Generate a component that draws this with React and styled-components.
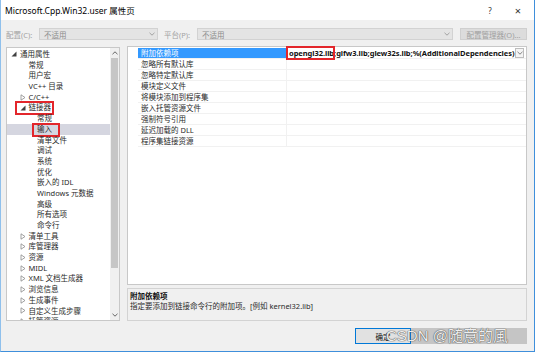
import React from "react";
import styled, { createGlobalStyle } from "styled-components";

const GlobalStyle = createGlobalStyle`
  html, body { margin: 0; padding: 0; background: #ffffff; }
  body { font-family: "Noto Sans", "Noto Sans CJK SC", sans-serif; }
  * { box-sizing: border-box; }
`;

const Window = styled.div`
  position: relative;
  width: 535px;
  height: 352px;
  background: #f0f0f0;
  border: 1px solid #3f8fdb;
  border-top: none;
  border-left-color: #8fc0ec;
  display: flex;
  flex-direction: column;
  font-size: 7.5px;
  color: #1a1a1a;
`;

const TitleBar = styled.div`
  height: 20px;
  background: #ffffff;
  display: flex;
  align-items: center;
  padding: 0 2px 0 4px;
`;

const Title = styled.div`
  flex: 1;
  font-size: 8.5px;
  color: #000;
`;

const TitleButton = styled.div`
  width: 28px;
  text-align: center;
  font-size: ${(p) => p.$size || 9}px;
  color: #333;
`;

const Toolbar = styled.div`
  margin-top: 8px;
  height: 12px;
  display: flex;
  align-items: center;
  padding-left: 5px;
`;

const Label = styled.div`
  width: ${(p) => p.$w}px;
  margin-left: ${(p) => p.$ml || 0}px;
  color: #a3a3a3;
  white-space: nowrap;
`;

const Combo = styled.div`
  width: ${(p) => p.$w}px;
  height: 12px;
  background: #e4e4e4;
  border: 1px solid #d2d2d2;
  display: flex;
  align-items: center;
  padding-left: 4px;
  color: #8c8c8c;
`;

const ComboText = styled.div`
  flex: 1;
`;

const ComboArrow = styled.div`
  width: 10px;
  display: flex;
  justify-content: center;
`;

const DisabledButton = styled.div`
  width: ${(p) => p.$w}px;
  margin-left: ${(p) => p.$ml || 0}px;
  height: 12px;
  background: #dcdcdc;
  border: 1px solid #cfcfcf;
  color: #a0a0a0;
  display: flex;
  align-items: center;
  justify-content: center;
  white-space: nowrap;
`;

const Main = styled.div`
  margin-top: 6px;
  display: flex;
  align-items: flex-start;
  padding-left: 5px;
  gap: 7px;
`;

const Tree = styled.div`
  width: 114px;
  height: 274px;
  margin-top: 1px;
  background: #ffffff;
  border: 1px solid #c8c8c8;
  display: flex;
  overflow: hidden;
`;

const TreeList = styled.div`
  flex: 1;
  padding-top: 1px;
  overflow: hidden;
`;

const TreeRow = styled.div`
  height: 10.7px;
  line-height: 10.7px;
  display: flex;
  align-items: center;
  padding-left: ${(p) => 4 + p.$lvl * 8.5}px;
  background: ${(p) => (p.$sel ? "#d5d6e0" : "transparent")};
  white-space: nowrap;
  color: #2a2a2a;
`;

const Expander = styled.div`
  width: 9px;
  flex: none;
  display: flex;
  align-items: center;
`;

const TreeText = styled.span`
  position: relative;
`;

const RedBox = styled.span`
  position: absolute;
  border: 2px solid #e3262b;
  pointer-events: none;
  left: ${(p) => p.$l}px;
  right: ${(p) => p.$r}px;
  top: ${(p) => p.$t}px;
  bottom: ${(p) => p.$b}px;
`;

const Scrollbar = styled.div`
  width: 9px;
  flex: none;
  background: #f0f0f0;
  display: flex;
  flex-direction: column;
`;

const ScrollArrow = styled.div`
  height: 10px;
  display: flex;
  align-items: center;
  justify-content: center;
`;

const ScrollThumb = styled.div`
  height: 210px;
  margin: 0 1px;
  background: #c6c6c6;
`;

const ScrollTrack = styled.div`
  flex: 1;
`;

const RightCol = styled.div`
  width: 400px;
  display: flex;
  flex-direction: column;
  gap: 3px;
`;

const Grid = styled.div`
  height: 239px;
  background: #ffffff;
  border: 1px solid #c8c8c8;
  padding: 1px 0 0 10px;
`;

const GridRow = styled.div`
  height: 11px;
  display: flex;
  border-bottom: 1px solid #f1f1f1;
`;

const NameCell = styled.div`
  width: 149px;
  flex: none;
  padding-left: 3px;
  line-height: 10px;
  white-space: nowrap;
  background: ${(p) => (p.$sel ? "#3399ff" : "transparent")};
  color: ${(p) => (p.$sel ? "#ffffff" : "#2a2a2a")};
  border-right: 1px solid #f1f1f1;
`;

const ValueCell = styled.div`
  flex: 1;
  position: relative;
  display: flex;
  align-items: center;
  padding-left: 2px;
  font-weight: 700;
  color: #111;
  white-space: nowrap;
`;

const ValueText = styled.span`
  flex: 1;
  position: relative;
  letter-spacing: -0.05px;
`;

const DropButton = styled.div`
  width: 9px;
  height: 10px;
  margin-right: 2px;
  border: 1px solid #bdbdbd;
  background: #f4f4f4;
  display: flex;
  align-items: center;
  justify-content: center;
`;

const Desc = styled.div`
  height: 33px;
  border: 1px solid #d3d3d3;
  padding: 2px 2px;
  line-height: 10px;
`;

const DescTitle = styled.div`
  font-weight: 700;
  color: #111;
`;

const DescText = styled.div`
  color: #2a2a2a;
`;

const Footer = styled.div`
  position: relative;
  margin-top: 7px;
  height: 16px;
  display: flex;
  padding-left: 354px;
`;

const Button = styled.div`
  width: 56px;
  height: 16px;
  background: #e1e1e1;
  border: 1px solid ${(p) => (p.$primary ? "#0078d7" : "#adadad")};
  display: flex;
  align-items: center;
  justify-content: center;
  color: #111;
`;

const Watermark = styled.div`
  position: absolute;
  left: 382px;
  right: 7px;
  top: 0;
  height: 16px;
  background: linear-gradient(to right, transparent 28px, #c5c5c5 28px);
  font-family: "Liberation Sans", "Noto Sans CJK SC", sans-serif;
  font-size: 15px;
  line-height: 16px;
  color: #eeeeee;
  text-shadow: 0 0 1px #444, 0 0 1px #444;
  white-space: nowrap;
  padding-left: 3px;
`;

const Chevron = ({ dir = "down", color = "#9a9a9a" }) => (
  <svg width="6" height="4" viewBox="0 0 6 4">
    <polyline
      points={dir === "down" ? "0.5,0.8 3,3.2 5.5,0.8" : "0.5,3.2 3,0.8 5.5,3.2"}
      fill="none"
      stroke={color}
      strokeWidth="0.9"
    />
  </svg>
);

const OpenTri = () => (
  <svg width="6" height="6" viewBox="0 0 6 6">
    <polygon points="5.5,0.5 5.5,5.5 0.5,5.5" fill="#404040" />
  </svg>
);

const ClosedTri = () => (
  <svg width="6" height="7" viewBox="0 0 6 7">
    <polygon points="1,0.8 5,3.5 1,6.2" fill="none" stroke="#8a8a8a" strokeWidth="0.8" />
  </svg>
);

const treeItems = [
  { t: "通用属性", lvl: 0, exp: "open" },
  { t: "常规", lvl: 1 },
  { t: "用户宏", lvl: 1 },
  { t: "VC++ 目录", lvl: 1 },
  { t: "C/C++", lvl: 1, exp: "closed" },
  { t: "链接器", lvl: 1, exp: "open", box: "linker" },
  { t: "常规", lvl: 2 },
  { t: "输入", lvl: 2, sel: true, box: "input" },
  { t: "清单文件", lvl: 2 },
  { t: "调试", lvl: 2 },
  { t: "系统", lvl: 2 },
  { t: "优化", lvl: 2 },
  { t: "嵌入的 IDL", lvl: 2 },
  { t: "Windows 元数据", lvl: 2 },
  { t: "高级", lvl: 2 },
  { t: "所有选项", lvl: 2 },
  { t: "命令行", lvl: 2 },
  { t: "清单工具", lvl: 1, exp: "closed" },
  { t: "库管理器", lvl: 1, exp: "closed" },
  { t: "资源", lvl: 1, exp: "closed" },
  { t: "MIDL", lvl: 1, exp: "closed" },
  { t: "XML 文档生成器", lvl: 1, exp: "closed" },
  { t: "浏览信息", lvl: 1, exp: "closed" },
  { t: "生成事件", lvl: 1, exp: "closed" },
  { t: "自定义生成步骤", lvl: 1, exp: "closed" },
  { t: "托管资源", lvl: 1, exp: "closed" },
];

const props = [
  "附加依赖项",
  "忽略所有默认库",
  "忽略特定默认库",
  "模块定义文件",
  "将模块添加到程序集",
  "嵌入托管资源文件",
  "强制符号引用",
  "延迟加载的 DLL",
  "程序集链接资源",
];

export default function App() {
  return (
    <>
      <GlobalStyle />
      <Window>
        <TitleBar>
          <Title>Microsoft.Cpp.Win32.user 属性页</Title>
          <TitleButton $size={8}>?</TitleButton>
          <TitleButton $size={11}>×</TitleButton>
        </TitleBar>

        <Toolbar>
          <Label $w={33}>配置(C):</Label>
          <Combo $w={119}>
            <ComboText>不适用</ComboText>
            <ComboArrow>
              <Chevron />
            </ComboArrow>
          </Combo>
          <Label $w={33} $ml={6}>平台(P):</Label>
          <Combo $w={256}>
            <ComboText>不适用</ComboText>
            <ComboArrow>
              <Chevron />
            </ComboArrow>
          </Combo>
          <DisabledButton $w={67} $ml={7}>配置管理器(O)...</DisabledButton>
        </Toolbar>

        <Main>
          <Tree>
            <TreeList>
              {treeItems.map((it, i) => (
                <TreeRow key={i} $lvl={it.lvl} $sel={it.sel}>
                  <Expander>
                    {it.exp === "open" && <OpenTri />}
                    {it.exp === "closed" && <ClosedTri />}
                  </Expander>
                  <TreeText>
                    {it.t}
                    {it.box === "linker" && <RedBox $l={-14} $r={-3} $t={-1} $b={-2} />}
                    {it.box === "input" && <RedBox $l={-5} $r={-8} $t={-1} $b={-2} />}
                  </TreeText>
                </TreeRow>
              ))}
            </TreeList>
            <Scrollbar>
              <ScrollArrow>
                <Chevron dir="up" color="#555" />
              </ScrollArrow>
              <ScrollThumb />
              <ScrollTrack />
              <ScrollArrow>
                <Chevron dir="down" color="#555" />
              </ScrollArrow>
            </Scrollbar>
          </Tree>

          <RightCol>
            <Grid>
              {props.map((p, i) => (
                <GridRow key={i}>
                  <NameCell $sel={i === 0}>{p}</NameCell>
                  <ValueCell>
                    {i === 0 && (
                      <>
                        <ValueText>
                          opengl32.lib;glfw3.lib;glew32s.lib;%(AdditionalDependencies)
                          <RedBox $l={-3} $r={180} $t={-2} $b={-2} />
                        </ValueText>
                        <DropButton>
                          <Chevron color="#777" />
                        </DropButton>
                      </>
                    )}
                  </ValueCell>
                </GridRow>
              ))}
            </Grid>
            <Desc>
              <DescTitle>附加依赖项</DescTitle>
              <DescText>指定要添加到链接命令行的附加项。[例如 kernel32.lib]</DescText>
            </Desc>
          </RightCol>
        </Main>

        <Footer>
          <Button $primary>确定</Button>
          <Watermark>CSDN @随意的風</Watermark>
        </Footer>
      </Window>
    </>
  );
}
